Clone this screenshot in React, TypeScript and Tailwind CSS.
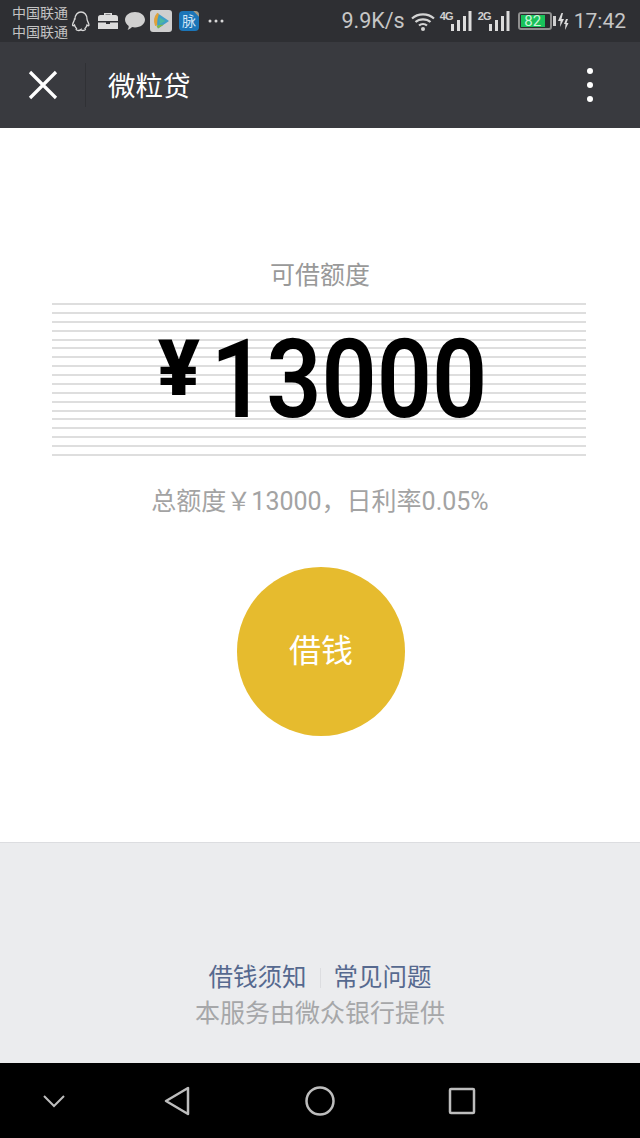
const lines = Array.from({ length: 18 }, (_, i) => i);

function StatusIcons() {
  return (
    <div className="flex items-center">
      <svg width="20" height="22" viewBox="0 0 20 22" className="ml-[3px]" fill="none" stroke="#d8d8d8" strokeWidth="1.300">
        <path d="M4 9c0-4 2.500-7 6-7s6 3 6 7c0 2 1.500 3 2 6 0 1-1 1-2 0-.5 2-1 2.500-2 3.500 1 1 0 2-2 2-1 0-2-.5-2-1-.5.5-1 1-2.500 1-2 0-3-1-2-2-1-1-1.500-1.500-2-3.500-1 1-2 1-2 0 .5-3 2-4 2-6z" />
      </svg>
      <svg width="22" height="18" viewBox="0 0 22 18" className="ml-[6px]">
        <path d="M7 3V1h8v2h3.500A2.500 2.500 0 0 1 21 5.500V9H1V5.500A2.500 2.500 0 0 1 3.500 3zM8.500 3h5V2.500h-5z" fill="#dcdcdc" fillRule="evenodd" />
        <path d="M1 10.500h8V12h4v-1.500h8V17H1z" fill="#dcdcdc" />
      </svg>
      <svg width="22" height="20" viewBox="0 0 22 20" className="ml-[5px]">
        <path d="M11 1c5.500 0 10 3.400 10 7.700s-4.500 7.700-10 7.700c-1 0-2-.1-3-.4-1.200 1.400-3 2.500-4.500 2.800.8-1 1.200-2.300 1.200-3.900C2.700 13.400 1 11.200 1 8.700 1 4.400 5.500 1 11 1z" fill="#d0d0d0" />
      </svg>
      <svg width="22" height="22" viewBox="0 0 22 22" className="ml-[4px]">
        <rect width="22" height="22" rx="3" fill="#cfcfcf" />
        <path d="M8 3.500 19 11 8 18.500C6.500 14 6.500 8 8 3.500z" fill="#3f9fc8" />
        <path d="M8 3.500C5 7 4.500 12 6 15.500 6 11 6.500 7 8 3.500z" fill="#e0a23a" stroke="#e0a23a" strokeWidth="2" />
        <path d="M6.500 16 8 18.500 14 14.500 9 15z" fill="#7fb84a" />
        <path d="M9.500 7.500 15.500 11 9.500 14.500z" fill="#4bb8a0" />
      </svg>
      <div className="relative ml-[7px] flex h-[20px] w-[20px] items-center justify-center overflow-hidden rounded-[4px] bg-[#1b75b8] text-[14px] leading-none text-[#cfe4f5]">
        脉
        <span className="absolute right-[-4px] top-[-4px] h-[8px] w-[8px] rotate-45 bg-[#a89a80]" />
      </div>
      <svg width="16" height="4" viewBox="0 0 16 4" className="ml-[9px]" fill="#d8d8d8">
        <circle cx="2" cy="2" r="1.500" />
        <circle cx="8" cy="2" r="1.500" />
        <circle cx="14" cy="2" r="1.500" />
      </svg>
    </div>
  );
}

function Signal({ label }: { label: string }) {
  return (
    <div className="flex h-[20px] w-[32px] items-start">
      <span className="w-[11px] text-[11px] font-bold leading-[10px] tracking-[-0.8px] text-[#d0d0d0] [font-family:'Liberation_Sans',sans-serif]">{label}</span>
      <svg width="21" height="20" viewBox="0 0 21 20" fill="#dcdcdc">
        <rect x="0" y="13" width="3" height="7" />
        <rect x="6" y="9" width="3" height="11" />
        <rect x="12" y="5" width="3" height="15" />
        <rect x="17.500" y="0" width="3" height="20" />
      </svg>
    </div>
  );
}

function RightStatus() {
  return (
    <div className="flex items-center text-[#c6c6c6]">
      <span className="text-[21.500px] leading-none">9.9K/s</span>
      <svg width="24" height="19" viewBox="0 0 24 19" className="ml-[6px]" fill="none" stroke="#d4d4d4" strokeWidth="2.200">
        <path d="M1 6.500c6-5.500 16-5.500 22 0M4.500 10c4-3.600 11-3.600 15 0M8 13.500c2.300-2 5.700-2 8 0" />
        <circle cx="12" cy="17" r="2" fill="#d4d4d4" stroke="none" />
      </svg>
      <div className="ml-[5px] flex gap-[6px]">
        <Signal label="4G" />
        <Signal label="2G" />
      </div>
      <div className="ml-[8px] flex h-[18px] w-[34px] items-stretch rounded-[3px] border-2 border-[#8f8f8f] bg-[#2a2b2e] p-px">
        <div className="flex w-[24px] items-center justify-center bg-[#19c15a] text-[15px] leading-none text-[#c9f5d8]">82</div>
      </div>
      <span className="ml-px h-[10px] w-[3px] bg-[#d0d0d0]" />
      <svg width="11" height="17" viewBox="0 0 11 17" className="ml-[2px]" fill="#dcdcdc">
        <path d="M3.500 0 0 8h2.500L2 14l4-8H3.500L5 0z" />
        <path d="M8 6 6 11h1.500L7 17l3.500-7H8.500L10 6z" />
      </svg>
      <span className="ml-[5px] text-[21px] leading-none">17:42</span>
    </div>
  );
}

export default function App() {
  return (
    <div className="flex h-[1138px] w-[640px] flex-col overflow-hidden bg-white [font-family:Roboto,'Noto_Sans_CJK_SC',sans-serif]">
      <div className="flex h-[42px] shrink-0 items-center justify-between bg-[#2e2f33] pl-[12px] pr-[14px]">
        <div className="flex items-center">
          <div className="mt-[3px] w-[56px] text-[14px] leading-[19px] text-[#c4c4c4]">
            <div>中国联通</div>
            <div>中国联通</div>
          </div>
          <StatusIcons />
        </div>
        <RightStatus />
      </div>

      <div className="flex h-[86px] shrink-0 items-center bg-[#393a3f]">
        <div className="flex w-[85px] justify-center">
          <svg width="30" height="30" viewBox="0 0 30 30" stroke="#ffffff" strokeWidth="3.200">
            <path d="M2 2 28 28M28 2 2 28" />
          </svg>
        </div>
        <span className="h-[44px] w-px bg-[#303135]" />
        <span className="ml-[22px] mt-[4px] text-[27.500px] leading-none text-white">微粒贷</span>
        <div className="ml-auto mr-[47px] flex flex-col gap-[8px]">
          <span className="h-[6px] w-[6px] rounded-full bg-white" />
          <span className="h-[6px] w-[6px] rounded-full bg-white" />
          <span className="h-[6px] w-[6px] rounded-full bg-white" />
        </div>
      </div>

      <div className="flex flex-1 flex-col items-center border-b border-[#dcdde0] bg-white pt-[132px]">
        <div className="text-[25px] leading-[32px] text-[#999999]">可借额度</div>
        <div className="relative mt-[11px] ml-[-2px] flex h-[153px] w-[534px] flex-col justify-between">
          {lines.map((i) => (
            <div key={i} className="h-[2px] bg-[#dedede]" />
          ))}
          <div className="absolute inset-0 flex items-center justify-center pl-[26px]">
            <span className="mr-[-8px] mt-[-21px] text-[78px] font-black leading-none text-black">¥</span>
            <span className="scale-x-[0.88] text-[110px] font-semibold leading-none text-black">13000</span>
          </div>
        </div>
        <div className="mt-[30px] text-[25px] leading-[32px] text-[#a3a3a3]">总额度￥13000，日利率0.05%</div>
        <button className="ml-[2px] mt-[49px] flex h-[169px] w-[168px] items-center justify-center rounded-full bg-[#e6bb2e] pb-[2px] text-[32px] text-white">借钱</button>
      </div>

      <div className="flex h-[220px] shrink-0 flex-col items-center bg-[#ebecee] pt-[117px]">
        <div className="flex items-center text-[24.500px] leading-[36px] text-[#56698f]">
          <span>借钱须知</span>
          <span className="mx-[13px] h-[20px] w-px bg-[#dcdde0]" />
          <span>常见问题</span>
        </div>
        <div className="text-[25px] leading-[36px] text-[#a6a7a9]">本服务由微众银行提供</div>
      </div>

      <div className="flex h-[75px] shrink-0 items-center bg-black">
        <svg width="24" height="14" viewBox="0 0 24 14" fill="none" stroke="#bdbdbd" strokeWidth="2" className="ml-[42px]">
          <path d="M2 2 12 12 22 2" />
        </svg>
        <svg width="26" height="30" viewBox="0 0 26 30" fill="none" stroke="#bdbdbd" strokeWidth="2.500" strokeLinejoin="round" className="ml-[98px]">
          <path d="M24 2V28L2 15z" />
        </svg>
        <svg width="30" height="30" viewBox="0 0 30 30" fill="none" stroke="#bdbdbd" strokeWidth="2.500" className="ml-[115px]">
          <circle cx="15" cy="15" r="13.500" />
        </svg>
        <svg width="28" height="28" viewBox="0 0 28 28" fill="none" stroke="#bdbdbd" strokeWidth="2.500" strokeLinejoin="round" className="ml-[113px]">
          <rect x="2" y="2" width="24" height="24" rx="1" />
        </svg>
      </div>
    </div>
  );
}
